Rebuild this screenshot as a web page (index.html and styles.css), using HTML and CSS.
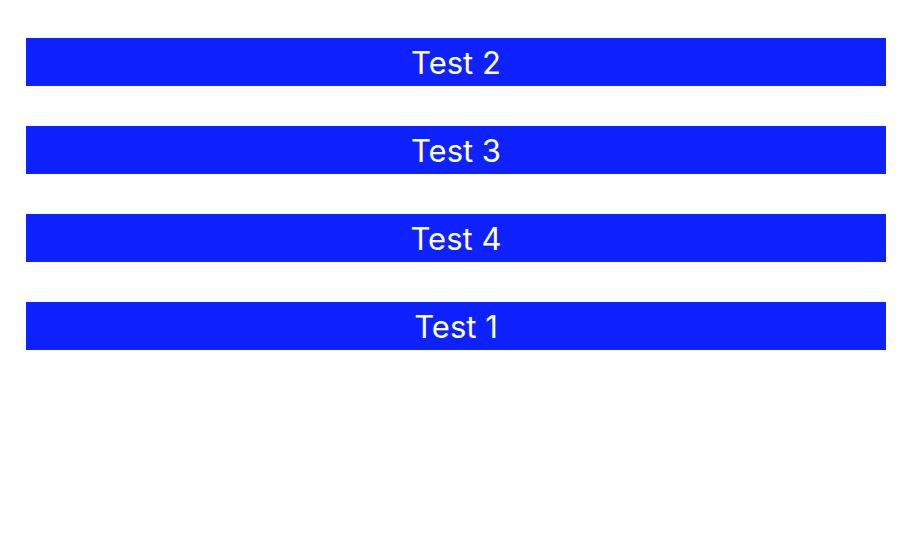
FILE: index.html
```html
<!DOCTYPE html>
<html>
<head>
<meta charset="utf-8">
<link rel="stylesheet" href="styles.css">
</head>
<body>
<div class="list">
  <div class="item">Test 2</div>
  <div class="item">Test 3</div>
  <div class="item">Test 4</div>
  <div class="item">Test 1</div>
</div>
</body>
</html>
```
FILE: styles.css
```css
html, body {
  margin: 0;
  background: #ffffff;
}
.list {
  display: flex;
  flex-direction: column;
  gap: 40px;
  padding: 38px 26px;
}
.item {
  height: 48px;
  box-sizing: border-box;
  padding-top: 1px;
  background: #0d22ff;
  color: #ffffff;
  font-family: Inter, "Liberation Sans", sans-serif;
  font-size: 31px;
  display: flex;
  align-items: center;
  justify-content: center;
}
```
